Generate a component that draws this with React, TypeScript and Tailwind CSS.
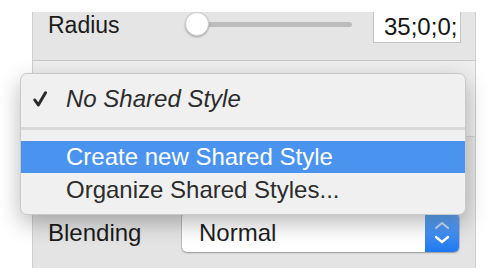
import React from "react";

export default function App() {
  const font = { fontFamily: '"Liberation Sans", Arial, sans-serif' };
  return (
    <div className="relative w-[494px] h-[280px] bg-white overflow-hidden" style={font}>
      {/* Inspector panel */}
      <div className="ml-[32px] mt-[12px] w-[444px] h-[256px] border-l border-r border-[#cfcfcf] flex flex-col">
        {/* Radius row */}
        <div className="h-[49px] bg-[#e5e5e5] border-b border-[#c8c8c8] flex items-start">
          <div className="pl-[15px] h-[27px] flex items-center text-[23px] text-[#1b1b1b] w-[152px]">Radius</div>
          <div className="relative w-[167px] h-[24px] flex items-center">
            <div className="absolute left-[12px] right-0 h-[5px] rounded-full bg-[#bcbcbc]" />
            <div className="relative w-[24px] h-[24px] rounded-full bg-white border border-[#cdcdcd] shadow-[0_1px_2px_rgba(0,0,0,0.3)]" />
          </div>
          <div className="ml-[21px] w-[88px] h-[31px] bg-white border border-[#c4c4c4] border-t-0 flex items-center pl-[10px] overflow-hidden text-[24px] text-[#151515] whitespace-nowrap">
            35;0;0;
          </div>
        </div>
        {/* Hidden shared style row */}
        <div className="h-[75px] bg-[#eeeeee]" />
        {/* Blending row */}
        <div className="flex-1 bg-[#e4e4e4] border-t border-[#d2d2d2] flex items-start pt-[76px]">
          <div className="pl-[15px] w-[149px] h-[39px] flex items-center text-[24px] text-[#1b1b1b]">Blending</div>
          <div className="w-[277px] h-[39px] rounded-[5px] bg-white shadow-[0_0_0_1px_rgba(0,0,0,0.12),0_1px_2px_rgba(0,0,0,0.25)] flex overflow-hidden">
            <div className="flex-1 flex items-center pl-[17px] text-[24px] text-[#1f1f1f]">Normal</div>
            <div className="w-[34px] h-full bg-gradient-to-b from-[#65a9f8] to-[#1c78ef] flex items-center justify-center">
              <svg width="16" height="26" viewBox="0 0 16 26" fill="none">
                <path d="M2 8 L8 3 L14 8" stroke="rgba(255,255,255,0.65)" strokeWidth="2.2" strokeLinecap="round" strokeLinejoin="round" />
                <path d="M2 17 L8 22 L14 17" stroke="white" strokeWidth="2.4" strokeLinecap="round" strokeLinejoin="round" />
              </svg>
            </div>
          </div>
        </div>
      </div>

      {/* Popup menu */}
      <div className="absolute left-[20px] top-[73px] w-[446px] h-[142px] rounded-[7px] bg-[#f0f0f0] border border-[#c9c9c9] shadow-[0_8px_22px_rgba(0,0,0,0.28)] flex flex-col overflow-hidden">
        <div className="h-[50px] flex items-center text-[24px] text-[#2c2c2c]">
          <div className="w-[45px] flex pl-[12px]">
            <svg width="14" height="16" viewBox="0 0 14 16" fill="none">
              <path d="M1.8 9 L5.3 14 L12.5 1.8" stroke="#2a2a2a" strokeWidth="3" strokeLinecap="round" strokeLinejoin="round" />
            </svg>
          </div>
          <span className="italic">No Shared Style</span>
        </div>
        <div className="mt-[3px] h-[3px] bg-[#d9d9d9]" />
        <div className="h-[11px]" />
        <div className="h-[32px] bg-[#4a94f0] flex items-center pl-[45px] text-[24px] text-white">Create new Shared Style</div>
        <div className="h-[33px] flex items-center pl-[45px] text-[24px] text-[#2c2c2c]">Organize Shared Styles...</div>
      </div>
    </div>
  );
}
